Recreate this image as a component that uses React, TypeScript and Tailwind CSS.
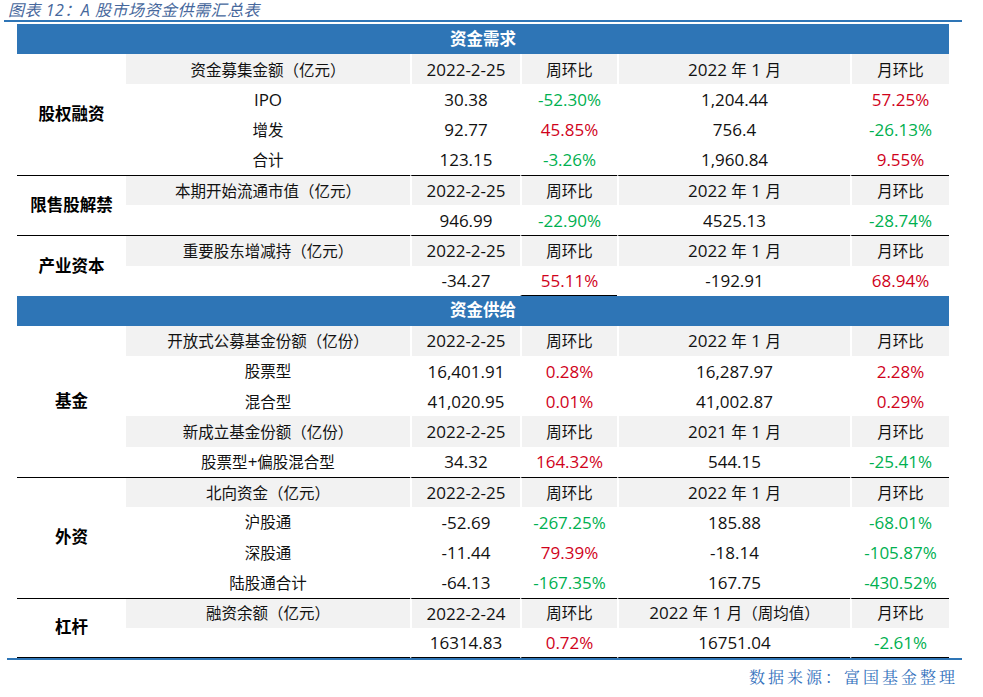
import React from 'react'

type Cell = string
type Row = { cells: Cell[]; head?: boolean }
type Group = { label: string; rows: Row[]; top?: boolean; bottom?: boolean; lastCol4Line?: boolean }

const H = (a: string, b = '2022-2-25', c = '2022 年 1 月'): Row => ({
  head: true,
  cells: [a, b, '周环比', c, '月环比'],
})

const demand: Group[] = [
  {
    label: '股权融资',
    rows: [
      H('资金募集金额（亿元）'),
      { cells: ['IPO', '30.38', 'g-52.30%', '1,204.44', 'r57.25%'] },
      { cells: ['增发', '92.77', 'r45.85%', '756.4', 'g-26.13%'] },
      { cells: ['合计', '123.15', 'g-3.26%', '1,960.84', 'r9.55%'] },
    ],
  },
  {
    label: '限售股解禁',
    top: true,
    rows: [H('本期开始流通市值（亿元）'), { cells: ['', '946.99', 'g-22.90%', '4525.13', 'g-28.74%'] }],
  },
  {
    label: '产业资本',
    top: true,
    lastCol4Line: true,
    rows: [H('重要股东增减持（亿元）'), { cells: ['', '-34.27', 'r55.11%', '-192.91', 'r68.94%'] }],
  },
]

const supply: Group[] = [
  {
    label: '基金',
    rows: [
      H('开放式公募基金份额（亿份）'),
      { cells: ['股票型', '16,401.91', 'r0.28%', '16,287.97', 'r2.28%'] },
      { cells: ['混合型', '41,020.95', 'r0.01%', '41,002.87', 'r0.29%'] },
      H('新成立基金份额（亿份）', '2022-2-25', '2021 年 1 月'),
      { cells: ['股票型+偏股混合型', '34.32', 'r164.32%', '544.15', 'g-25.41%'] },
    ],
  },
  {
    label: '外资',
    top: true,
    rows: [
      H('北向资金（亿元）'),
      { cells: ['沪股通', '-52.69', 'g-267.25%', '185.88', 'g-68.01%'] },
      { cells: ['深股通', '-11.44', 'r79.39%', '-18.14', 'g-105.87%'] },
      { cells: ['陆股通合计', '-64.13', 'g-167.35%', '167.75', 'g-430.52%'] },
    ],
  },
  {
    label: '杠杆',
    top: true,
    bottom: true,
    rows: [
      H('融资余额（亿元）', '2022-2-24', '2022 年 1 月（周均值）'),
      { cells: ['', '16314.83', 'r0.72%', '16751.04', 'g-2.61%'] },
    ],
  },
]

const cjk = /([\u3000-\u303f\u4e00-\u9fff\uff00-\uffef]+)/

function Txt({ s }: { s: string }) {
  const parts = s.split(cjk).filter(Boolean)
  return (
    <>
      {parts.map((p, i) =>
        cjk.test(p) ? (
          <span key={i} className="text-[15.5px]">
            {p}
          </span>
        ) : (
          <span key={i}>{p}</span>
        )
      )}
    </>
  )
}

function BlueRow({ title }: { title: string }) {
  return (
    <tr className="h-[30.2px]">
      <td colSpan={6} className="bg-[#2e75b6] text-center text-[16.5px] font-bold text-white">
        {title}
      </td>
    </tr>
  )
}

function GroupRows({ g }: { g: Group }) {
  return (
    <>
      {g.rows.map((r, ri) => {
        const first = ri === 0
        const last = ri === g.rows.length - 1
        const topLine = first && g.top ? 'border-t border-t-black' : ''
        const botLine = last && g.bottom ? 'border-b border-b-black' : ''
        return (
          <tr key={ri} className="h-[30.2px]">
            {first && (
              <td
                rowSpan={g.rows.length}
                className={`text-center text-[16.5px] font-bold text-black ${g.top ? 'border-t border-t-black' : ''} ${g.bottom ? 'border-b border-b-black' : ''}`}
              >
                {g.label}
              </td>
            )}
            {r.cells.map((c, ci) => {
              let color = 'text-[#111]'
              let text = c
              if (c.startsWith('g')) {
                color = 'text-[#00b050]'
                text = c.slice(1)
              } else if (c.startsWith('r')) {
                color = 'text-[#d0021b]'
                text = c.slice(1)
              }
              const sep = ci > 0 ? 'border-l-2 border-l-white' : ''
              const bg = r.head ? 'bg-[#f2f2f2]' : ''
              const col4 = last && g.lastCol4Line && ci === 2 ? 'border-b border-b-black' : ''
              return (
                <td
                  key={ci}
                  className={`p-0 text-center leading-none whitespace-nowrap ${color} ${sep} ${bg} ${topLine} ${botLine} ${col4}`}
                >
                  <Txt s={text} />
                </td>
              )
            })}
          </tr>
        )
      })}
    </>
  )
}

export default function App() {
  return (
    <div className="min-h-screen w-[983px] bg-white font-['Open_Sans','Noto_Sans_CJK_SC',sans-serif] text-[17px]">
      <div className="ml-[4px] w-[958px]">
        <div className="h-[22px] border-b-2 border-[#2e75b6] pl-[4px] pt-[1px] text-[16px] italic leading-[18px] tracking-[0.5px] text-[#46679c]">
          图表 12：A 股市场资金供需汇总表
        </div>
        <div className="ml-[13px] mt-[2px] w-[932px]">
          <table className="w-[932px] table-fixed border-separate border-spacing-0">
            <colgroup>
              <col className="w-[109px]" />
              <col className="w-[284px]" />
              <col className="w-[110px]" />
              <col className="w-[97px]" />
              <col className="w-[233px]" />
              <col className="w-[99px]" />
            </colgroup>
            <tbody>
              <BlueRow title="资金需求" />
              {demand.map((g, i) => (
                <GroupRows key={i} g={g} />
              ))}
              <BlueRow title="资金供给" />
              {supply.map((g, i) => (
                <GroupRows key={i} g={g} />
              ))}
            </tbody>
          </table>
        </div>
        <div className="ml-[3px] h-[2px] bg-[#2e75b6]" />
        <div className="pr-[4px] pt-[5px] text-right text-[16px] tracking-[3px] text-[#3572bd] font-['Noto_Serif_CJK_SC','Noto_Sans_CJK_SC',serif]">
          数据来源：富国基金整理
        </div>
      </div>
    </div>
  )
}
